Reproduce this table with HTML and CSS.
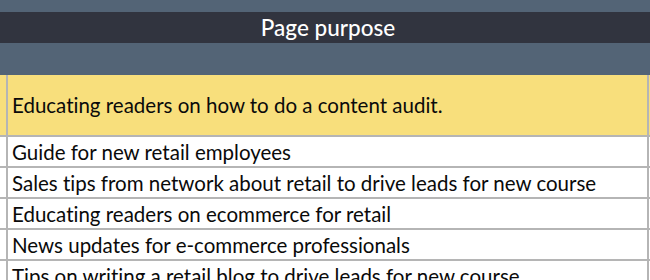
FILE: index.html
```html
<!DOCTYPE html>
<html>
<head>
<meta charset="utf-8">
<link rel="stylesheet" href="styles.css">
</head>
<body>
<div class="sheet">
  <div class="band band-top"></div>
  <div class="title">Page purpose</div>
  <div class="band band-sub"></div>
  <div class="rows">
    <div class="row row-hl"><div class="edge"></div><div class="cell">Educating readers on how to do a content audit.</div></div>
    <div class="row"><div class="edge"></div><div class="cell">Guide for new retail employees</div></div>
    <div class="row"><div class="edge"></div><div class="cell">Sales tips from network about retail to drive leads for new course</div></div>
    <div class="row"><div class="edge"></div><div class="cell">Educating readers on ecommerce for retail</div></div>
    <div class="row"><div class="edge"></div><div class="cell">News updates for e-commerce professionals</div></div>
    <div class="row"><div class="edge"></div><div class="cell">Tips on writing a retail blog to drive leads for new course</div></div>
  </div>
</div>
</body>
</html>
```
FILE: styles.css
```css
html, body {
  margin: 0;
  padding: 0;
  background: #ffffff;
}
body {
  width: 650px;
  height: 280px;
  overflow: hidden;
  font-family: Lato, "Noto Sans", sans-serif;
  font-variant-ligatures: none;
}
.sheet {
  display: flex;
  flex-direction: column;
}
.band {
  background: #536476;
}
.band-top {
  height: 12px;
}
.band-sub {
  height: 32px;
}
.title {
  height: 31px;
  background: #31343f;
  color: #ffffff;
  font-size: 22.5px;
  line-height: 31px;
  text-align: center;
  font-weight: 500;
  padding-left: 6px;
}
.rows {
  display: flex;
  flex-direction: column;
}
.row {
  display: flex;
  height: 29px;
  border-bottom: 2px solid #b5b5b5;
  background: #ffffff;
}
.row-hl {
  height: 60px;
  background: #f8df7c;
}
.edge {
  width: 6px;
  border-right: 2px solid #b5b5b5;
  flex: none;
}
.cell {
  width: 635px;
  padding-left: 4px;
  border-right: 2px solid #b5b5b5;
  display: flex;
  align-items: center;
  font-size: 20.5px;
  color: #0a0a0a;
  white-space: nowrap;
}
```
